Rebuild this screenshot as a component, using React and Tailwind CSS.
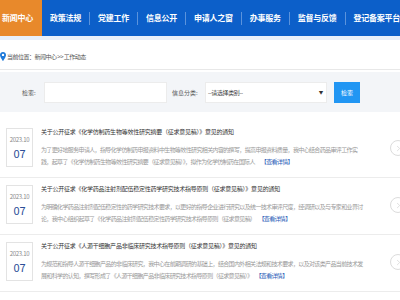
import { ChevronRight } from 'lucide-react';

const navItems = ['政策法规', '党建工作', '信息公开', '申请人之窗', '办事服务', '监督与反馈', '登记备案平台'];

const news = [
  {
    title: '关于公开征求《化学仿制药生物等效性研究摘要（征求意见稿）》意见的通知',
    line1: '为了更好地服务申请人，指导化学仿制药申报资料中生物等效性研究相关内容的撰写，提高申报资料质量，我中心结合药品审评工作实',
    line2: '践，起草了《化学仿制药生物等效性研究摘要（征求意见稿）》，拟作为化学仿制药在国际人',
  },
  {
    title: '关于公开征求《化学药品注射剂配伍稳定性药学研究技术指导原则（征求意见稿）》意见的通知',
    line1: '为明确化学药品注射剂配伍稳定性的药学研究技术要求，以更好的指导企业进行研究以及统一技术审评尺度，经调研以及与专家和业界讨',
    line2: '论，我中心组织起草了《化学药品注射剂配伍稳定性药学研究技术指导原则（征求意见稿）',
  },
  {
    title: '关于公开征求《人源干细胞产品非临床研究技术指导原则（征求意见稿）》意见的通知',
    line1: '为规范和指导人源干细胞产品的非临床研究，我中心在前期调研的基础上，结合国内外相关法规和技术要求，以及对该类产品当前技术发',
    line2: '展和科学的认知，撰写形成了《人源干细胞产品非临床研究技术指导原则（征求意见稿）》',
  },
];

function NewsItem({ item }) {
  return (
    <div className="h-[57px] flex border-b border-[#ececec]">
      <div className="ml-[6px] mt-[7px] w-[27px] h-[39px] border border-[#e3e3e3] flex flex-col items-center shrink-0">
        <span className="mt-[7px] text-[6px] tracking-[-0.3px] leading-[8px] text-[#8a8a8a]">2023.10</span>
        <span className="mt-[3px] text-[11px] leading-[12px] text-[#2d4f98]">07</span>
      </div>
      <div className="ml-[8px] flex-1 min-w-0 overflow-hidden">
        <div className="mt-[6px] text-[6px] tracking-[-0.24px] leading-[9px] text-[#333] whitespace-nowrap">{item.title}</div>
        <div className="mt-[8px] text-[6px] tracking-[-0.64px] leading-[12px] text-[#999] whitespace-nowrap">{item.line1}</div>
        <div className="text-[6px] tracking-[-0.64px] leading-[12px] text-[#999] whitespace-nowrap">
          {item.line2}
          <span className="ml-[6px] text-[#2d5eb8]">【查看详情】</span>
        </div>
      </div>
      <div className="w-[16px] h-[16px] mt-[19px] mr-[-6px] rounded-full border border-[#dcdcdc] flex items-center justify-center shrink-0">
        <ChevronRight size={9} color="#c8c8c8" strokeWidth={1.5} />
      </div>
    </div>
  );
}

export default function App() {
  return (
    <div
      className="w-[400px] h-[300px] overflow-hidden bg-white"
      style={{ fontFamily: '"Noto Sans CJK SC", "Noto Sans", sans-serif' }}
    >
      <nav className="h-[36px] bg-[#0c5fc9] flex items-stretch">
        <div className="bg-[#e8892b] pl-[2px] pr-[9px] flex items-center shrink-0 whitespace-nowrap text-white font-bold text-[8px] tracking-[-0.25px]">
          新闻中心
        </div>
        {navItems.map((name, i) => (
          <div key={name} className="flex items-center shrink-0">
            <span className="px-[8px] text-white font-bold text-[8px] tracking-[-0.25px] whitespace-nowrap">{name}</span>
            {i < navItems.length - 1 && <span className="w-px h-[13px] bg-[#5b93dc]" />}
          </div>
        ))}
      </nav>
      <div className="h-[4px] bg-[#e8f0fa]" />

      <div className="h-[30px] pt-[4px] flex items-center border-b border-[#e8e8e8] text-[6px] tracking-[-0.5px] text-[#555]">
        <svg width="6" height="9" viewBox="0 0 12 18" className="mr-[1px]">
          <path d="M6 0C2.7 0 0 2.6 0 5.9 0 10.3 6 18 6 18s6-7.7 6-12.1C12 2.6 9.3 0 6 0zm0 8.2a2.4 2.4 0 1 1 0-4.8 2.4 2.4 0 0 1 0 4.8z" fill="#1f7ad9" />
        </svg>
        <span className="whitespace-nowrap">当前位置：新闻中心 &gt;&gt; 工作动态</span>
      </div>

      <div className="mt-[2px] h-[40px] bg-[#f3f5f8] flex items-center text-[6px] text-[#555]">
        <span className="ml-[22px] w-[22px]">检索:</span>
        <div className="w-[123px] h-[21px] bg-white border border-[#ececec]" />
        <span className="ml-[5px] w-[33px] whitespace-nowrap">信息分类:</span>
        <div className="w-[122px] h-[21px] bg-white border border-[#ececec] flex items-center justify-between px-[2px] text-[6px] tracking-[-0.4px] text-[#444]">
          <span>--请选择类别--</span>
          <span className="text-[6px] scale-75 text-[#333]">▼</span>
        </div>
        <div className="ml-[7px] w-[26px] h-[21px] bg-[#2196f3] text-white flex items-center justify-center text-[6px]">检索</div>
      </div>

      <div className="pt-[9px]">
        {news.map((n) => (
          <NewsItem key={n.title} item={n} />
        ))}
      </div>
    </div>
  );
}
